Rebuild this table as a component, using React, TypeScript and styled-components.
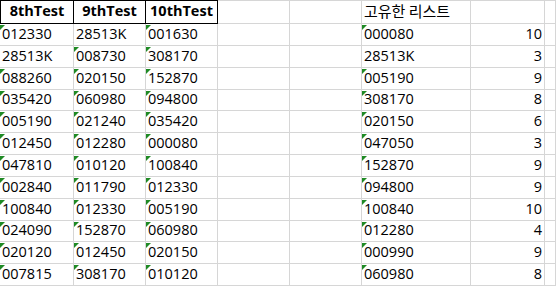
import React from "react";
import styled, { createGlobalStyle } from "styled-components";

const GlobalStyle = createGlobalStyle`
  html, body {
    margin: 0;
    padding: 0;
    background: #ffffff;
  }
  body {
    font-family: "Open Sans", "Noto Sans CJK KR", sans-serif;
    font-size: 14.5px;
    color: #000000;
    overflow: hidden;
  }
`;

const GRID = "#d6d6d6";

const Sheet = styled.div`
  display: grid;
  grid-template-columns: 74px 72px 72px 72px 72px 109px 74px 1fr;
  grid-template-rows: 24px;
  grid-auto-rows: 21.85px;
  width: 556px;
`;

const Cell = styled.div<{ $right?: boolean; $flag?: boolean }>`
  position: relative;
  box-sizing: border-box;
  display: flex;
  align-items: flex-end;
  justify-content: ${({ $right }) => ($right ? "flex-end" : "flex-start")};
  padding: 0 2px 1px 2px;
  line-height: 20px;
  border-right: 1px solid ${GRID};
  border-bottom: 1px solid ${GRID};
  white-space: nowrap;
  overflow: hidden;

  &::before {
    content: "";
    display: ${({ $flag }) => ($flag ? "block" : "none")};
    position: absolute;
    top: 1px;
    left: 0;
    width: 0;
    height: 0;
    border-top: 5px solid #1f8a24;
    border-right: 5px solid transparent;
  }
`;

const HeaderCell = styled(Cell)<{ $boxed?: boolean; $first?: boolean }>`
  justify-content: ${({ $boxed }) => ($boxed ? "center" : "flex-start")};
  font-weight: ${({ $boxed }) => ($boxed ? 700 : 400)};
  padding-bottom: 2px;
  border-top: 1px solid ${({ $boxed }) => ($boxed ? "#000" : GRID)};
  border-right-color: ${({ $boxed }) => ($boxed ? "#000" : GRID)};
  border-bottom-color: ${({ $boxed }) => ($boxed ? "#000" : GRID)};
  border-left: ${({ $first }) => ($first ? "1px solid #000" : "none")};
`;

const KoreanLabel = styled.span`
  font-family: "Noto Sans CJK KR", sans-serif;
  font-size: 15px;
`;

const test8 = ["012330", "28513K", "088260", "035420", "005190", "012450", "047810", "002840", "100840", "024090", "020120", "007815"];
const test9 = ["28513K", "008730", "020150", "060980", "021240", "012280", "010120", "011790", "012330", "152870", "012450", "308170"];
const test10 = ["001630", "308170", "152870", "094800", "035420", "000080", "100840", "012330", "005190", "060980", "020150", "010120"];
const unique = ["000080", "28513K", "005190", "308170", "020150", "047050", "152870", "094800", "100840", "012280", "000990", "060980"];
const counts = [10, 3, 9, 8, 6, 3, 9, 9, 10, 4, 9, 8];

// numbers stored as text get Excel's green corner flag
const isTextNumber = (value: string) => /^\d+$/.test(value);

const CodeCell: React.FC<{ value: string }> = ({ value }) => (
  <Cell $flag={isTextNumber(value)}>{value}</Cell>
);

export default function App() {
  return (
    <>
      <GlobalStyle />
      <Sheet>
        <HeaderCell $boxed $first>8thTest</HeaderCell>
        <HeaderCell $boxed>9thTest</HeaderCell>
        <HeaderCell $boxed>10thTest</HeaderCell>
        <HeaderCell />
        <HeaderCell />
        <HeaderCell>
          <KoreanLabel>고유한 리스트</KoreanLabel>
        </HeaderCell>
        <HeaderCell />
        <HeaderCell />

        {test8.map((value, index) => (
          <React.Fragment key={index}>
            <CodeCell value={value} />
            <CodeCell value={test9[index]} />
            <CodeCell value={test10[index]} />
            <Cell />
            <Cell />
            <CodeCell value={unique[index]} />
            <Cell $right>{counts[index]}</Cell>
            <Cell />
          </React.Fragment>
        ))}
      </Sheet>
    </>
  );
}
